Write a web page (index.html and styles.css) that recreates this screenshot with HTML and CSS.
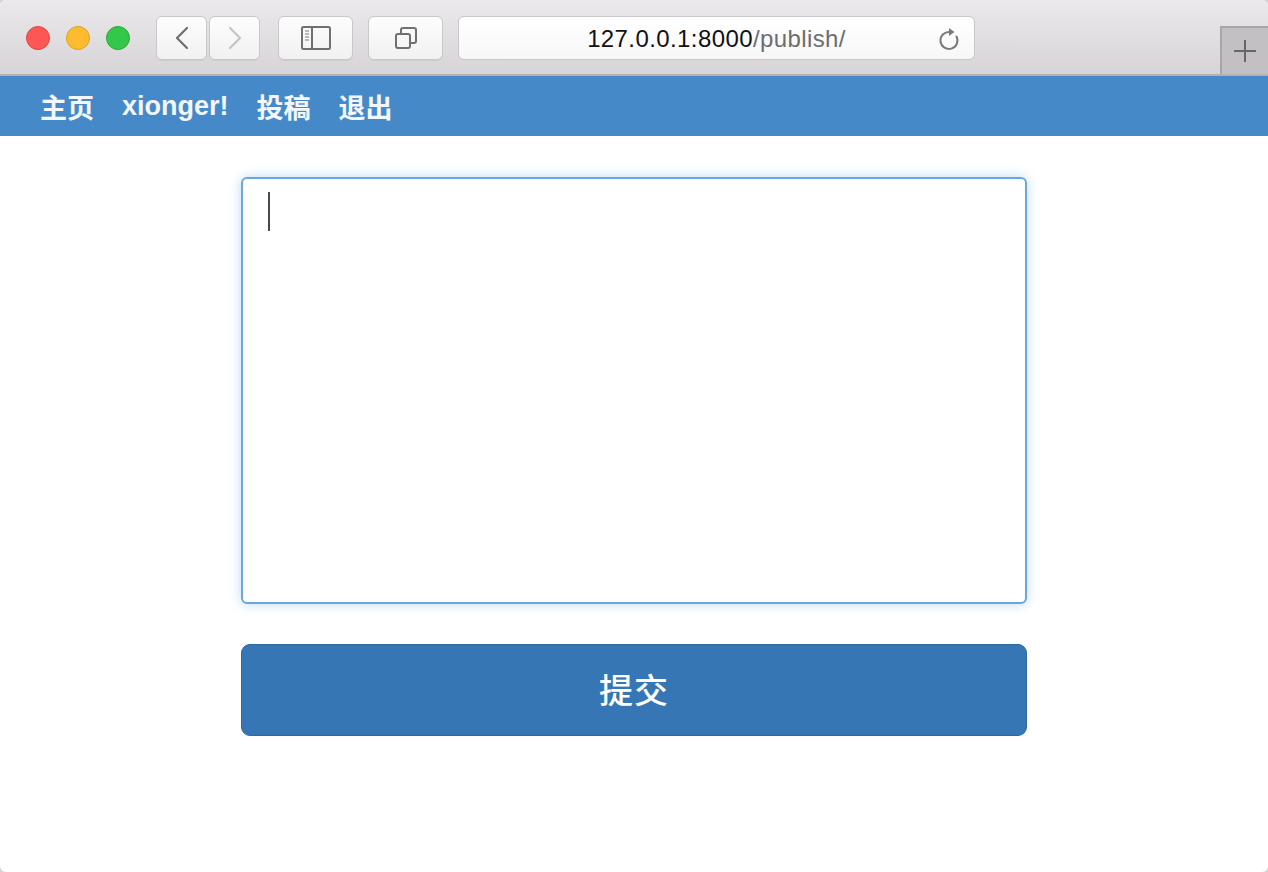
FILE: index.html
```html
<!DOCTYPE html>
<html lang="zh">
<head>
<meta charset="utf-8">
<title>publish</title>
<link rel="stylesheet" href="styles.css">
</head>
<body>
<div class="window">
  <div class="toolbar">
    <div class="lights">
      <span class="light red"></span>
      <span class="light yellow"></span>
      <span class="light green"></span>
    </div>
    <div class="navpair">
      <div class="tbtn half">
        <svg width="14" height="24" viewBox="0 0 14 24"><path d="M12 2 L2 12 L12 22" fill="none" stroke="#6e6e6e" stroke-width="2.2" stroke-linecap="round" stroke-linejoin="round"/></svg>
      </div>
      <div class="tbtn half">
        <svg width="14" height="24" viewBox="0 0 14 24"><path d="M2 2 L12 12 L2 22" fill="none" stroke="#c4c4c4" stroke-width="2.2" stroke-linecap="round" stroke-linejoin="round"/></svg>
      </div>
    </div>
    <div class="tbtn wide sidebar-btn">
      <svg width="30" height="24" viewBox="0 0 30 24"><rect x="1" y="1" width="28" height="22" rx="1.5" fill="none" stroke="#707070" stroke-width="2"/><line x1="11" y1="1" x2="11" y2="23" stroke="#707070" stroke-width="2"/><line x1="4" y1="5" x2="8" y2="5" stroke="#909090" stroke-width="1.2"/><line x1="4" y1="8" x2="8" y2="8" stroke="#909090" stroke-width="1.2"/><line x1="4" y1="11" x2="8" y2="11" stroke="#909090" stroke-width="1.2"/><line x1="4" y1="14" x2="8" y2="14" stroke="#909090" stroke-width="1.2"/></svg>
    </div>
    <div class="tbtn wide tabs-btn">
      <svg width="24" height="24" viewBox="0 0 24 24"><rect x="2" y="8" width="14" height="14" rx="2" fill="none" stroke="#707070" stroke-width="2"/><path d="M7 8 V4 a2 2 0 0 1 2 -2 H20 a2 2 0 0 1 2 2 V15 a2 2 0 0 1 -2 2 H16" fill="none" stroke="#707070" stroke-width="2"/></svg>
    </div>
    <div class="urlbar">
      <span class="url"><span class="host">127.0.0.1:8000</span><span class="path">/publish/</span></span>
      <svg class="reload" width="24" height="26" viewBox="0 0 24 26"><path d="M18.5 9.5 A8.5 8.5 0 1 1 12 5" fill="none" stroke="#7a7a7a" stroke-width="2" stroke-linecap="round"/><path d="M11 1 L16.5 5 L11 9 Z" fill="#7a7a7a"/></svg>
    </div>
    <div class="spacer"></div>
    <div class="newtab">
      <svg width="24" height="24" viewBox="0 0 24 24"><line x1="12" y1="1" x2="12" y2="23" stroke="#666" stroke-width="2"/><line x1="1" y1="12" x2="23" y2="12" stroke="#666" stroke-width="2"/></svg>
    </div>
  </div>
  <nav class="sitenav">
    <a class="navlink">主页</a>
    <a class="navlink">xionger!</a>
    <a class="navlink">投稿</a>
    <a class="navlink">退出</a>
  </nav>
  <main class="content">
    <form class="form">
      <div class="textarea"><span class="caret"></span></div>
      <button class="submit" type="button">提交</button>
    </form>
  </main>
</div>
</body>
</html>
```

FILE: styles.css
```css
* { box-sizing: border-box; }
html, body {
  margin: 0;
  padding: 0;
  height: 100%;
  background: #d4d4d4;
}
body {
  font-family: "Liberation Sans", "Noto Sans CJK SC", sans-serif;
}
.window {
  width: 1268px;
  height: 872px;
  background: #ffffff;
  border-radius: 6px;
  overflow: hidden;
  display: flex;
  flex-direction: column;
}
.toolbar {
  height: 76px;
  flex: none;
  display: flex;
  align-items: flex-start;
  background: linear-gradient(#ebe9eb, #d6d4d6);
  border-bottom: 2px solid #b3b1b3;
  padding-left: 26px;
}
.lights {
  display: flex;
  gap: 16px;
  margin-top: 26px;
}
.light {
  width: 24px;
  height: 24px;
  border-radius: 50%;
  display: block;
}
.red { background: #fc5753; border: 1px solid #de4640; }
.yellow { background: #fdbc2e; border: 1px solid #dea123; }
.green { background: #34c84a; border: 1px solid #27aa35; }
.navpair {
  display: flex;
  gap: 2px;
  margin-left: 26px;
  margin-top: 16px;
}
.tbtn {
  height: 44px;
  background: linear-gradient(#fdfdfd, #f1f1f1);
  border: 1px solid #c9c7c9;
  border-radius: 6px;
  display: flex;
  align-items: center;
  justify-content: center;
  box-shadow: 0 1px 0 rgba(0,0,0,0.05);
}
.half { width: 51px; }
.wide { width: 75px; margin-top: 16px; }
.sidebar-btn { margin-left: 18px; }
.tabs-btn { margin-left: 15px; }
.urlbar {
  margin-top: 16px;
  margin-left: 15px;
  width: 517px;
  height: 44px;
  background: linear-gradient(#ffffff, #f7f7f7);
  border: 1px solid #c9c7c9;
  border-radius: 6px;
  display: flex;
  align-items: center;
  justify-content: center;
  position: relative;
}
.url {
  font-size: 24px;
  letter-spacing: 0.4px;
  margin-top: 1px;
}
.host { color: #111; }
.path { color: #6d6d6d; }
.reload {
  position: absolute;
  right: 12px;
  top: 10px;
}
.spacer { flex: 1; }
.newtab {
  margin-top: 26px;
  width: 48px;
  height: 48px;
  background: #c2c0c2;
  border-left: 2px solid #a8a6a8;
  border-top: 2px solid #a8a6a8;
  display: flex;
  align-items: center;
  justify-content: center;
}
.sitenav {
  height: 60px;
  flex: none;
  background: #4589c9;
  display: flex;
  align-items: center;
  gap: 28px;
  padding-left: 40px;
}
.navlink {
  color: #f3f6fa;
  font-size: 27px;
  font-weight: bold;
  font-family: "Liberation Sans", "Noto Sans CJK SC", sans-serif;
}
.content {
  flex: 1;
  display: flex;
  justify-content: center;
  padding-top: 41px;
}
.form {
  width: 786px;
  display: flex;
  flex-direction: column;
  gap: 40px;
}
.textarea {
  height: 427px;
  border: 2px solid #6ba7dd;
  border-radius: 6px;
  box-shadow: 0 0 12px rgba(102,175,233,0.45);
  padding: 13px 0 0 25px;
  background: #fff;
}
.caret {
  display: block;
  width: 2px;
  height: 39px;
  background: #4a4a4a;
}
.submit {
  height: 92px;
  background: #3676b5;
  border: 1px solid #2d69a1;
  border-radius: 9px;
  color: #ffffff;
  font-size: 34px;
  font-weight: 500;
  font-family: "Liberation Sans", "Noto Sans CJK SC", sans-serif;
  letter-spacing: 1px;
  padding: 0 0 4px 0;
}
```
